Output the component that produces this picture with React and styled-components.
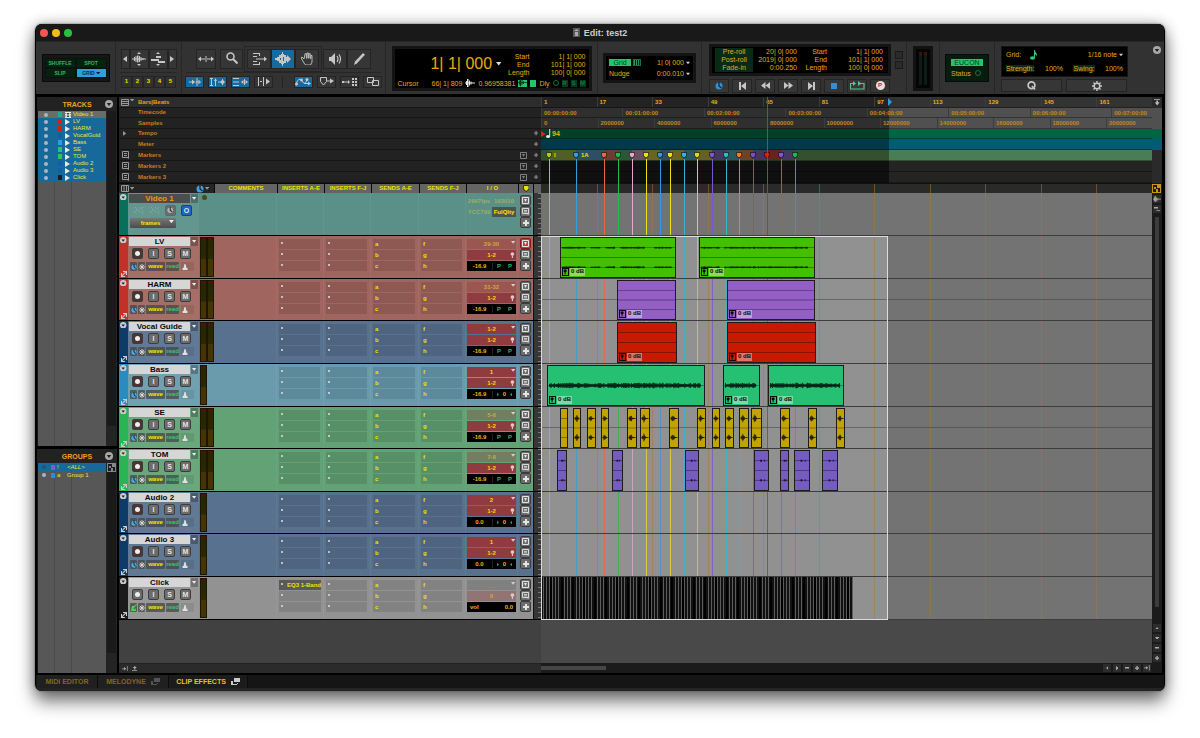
import React from 'react'
import styled, {createGlobalStyle, css} from 'styled-components'

/* ---------- data ---------- */

// the timeline is laid out in units, the full view is this many units wide
const VIEW = 611
const pct = value => `${(value / VIEW) * 100}%`

const trackList = [
    {name: 'Video 1', color: '#1fae88', video: true},
    {name: 'LV', color: '#d81e0c'},
    {name: 'HARM', color: '#d81e0c'},
    {name: 'VocalGuid', color: '#0f5fae'},
    {name: 'Bass', color: '#28a0e0'},
    {name: 'SE', color: '#26c466'},
    {name: 'TOM', color: '#26c466'},
    {name: 'Audio 2', color: '#0f5fae'},
    {name: 'Audio 3', color: '#0f5fae'},
    {name: 'Click', color: '#1c1c1c'},
]

const red = {strip: '#c23127', body: '#a0655e'}
const navy = {strip: '#0f3b69', body: '#58718f'}
const green = {strip: '#2bb455', body: '#62a274'}
const cyan = {strip: '#2a8bc0', body: '#699bad'}
const gray = {strip: '#1b1b1b', body: '#929292'}

const tracks = [
    {
        name: 'LV', skin: red, input: '29-30', dim: true, output: '1-2', vol: '-16.9', stereo: true, armed: true,
        clip: '#43c000', wave: 'thin', label: true, clips: [[19, 135], [158, 274]],
    },
    {
        name: 'HARM', skin: red, input: '31-32', dim: true, output: '1-2', vol: '-16.9', stereo: true,
        clip: '#935fc4', wave: 'flat', label: true, clips: [[76, 135], [186, 274]],
    },
    {
        name: 'Vocal Guide', skin: navy, input: '1-2', output: '1-2', vol: '-16.9', stereo: true,
        clip: '#c81a00', wave: 'flat', label: true, clips: [[76, 136], [186, 275]],
    },
    {
        name: 'Bass', skin: cyan, input: '1', output: '1-2', vol: '-16.9', pan: true,
        clip: '#26c073', wave: 'thick', label: true, clips: [[6, 164], [182, 219], [227, 303]],
    },
    {
        name: 'SE', skin: green, input: '5-6', dim: true, output: '1-2', vol: '-16.9', stereo: true,
        clip: '#c2a400', wave: 'hit',
        clips: [
            [19, 27], [32, 40], [46, 55], [60, 68], [86, 96], [99, 109], [128, 138], [156, 165],
            [171, 179], [184, 193], [198, 208], [210, 221], [239, 249], [267, 276], [295, 304],
        ],
    },
    {
        name: 'TOM', skin: green, input: '7-8', dim: true, output: '1-2', vol: '-16.9', stereo: true,
        clip: '#745cc0', wave: 'dots',
        clips: [[16, 26], [71, 82], [144, 158], [213, 228], [239, 248], [253, 269], [281, 297]],
    },
    {name: 'Audio 2', skin: navy, input: '2', output: '1-2', vol: '0.0', pan: true},
    {name: 'Audio 3', skin: navy, input: '1', output: '1-2', vol: '0.0', pan: true},
    {name: 'Click', skin: gray, input: '__', dim: true, output: '9', click: true, vol: '0.0'},
]

const markers = [
    {at: 8, color: '#a8cc1e', name: 'I'},
    {at: 35, color: '#2f9fe0', name: '1A'},
    {at: 63, color: '#ee6440'},
    {at: 77, color: '#25ba4c'},
    {at: 91, color: '#e9a4d2'},
    {at: 105, color: '#efe012'},
    {at: 119, color: '#3d93dd'},
    {at: 129, color: '#efe012'},
    {at: 143, color: '#30b4d6'},
    {at: 156, color: '#e6d60a'},
    {at: 171, color: '#7d55d0'},
    {at: 185, color: '#2bbcc8'},
    {at: 198, color: '#f57a22'},
    {at: 212, color: '#7650cc'},
    {at: 226, color: '#e01a08'},
    {at: 240, color: '#8058d4'},
    {at: 254, color: '#1fb854'},
]

const range = n => Array.from({length: n}, (_, i) => i)
const barLabels = range(11).map(i => ({at: (i * VIEW) / 11, text: String(1 + i * 16)}))
const timeLabels = range(8).map(i => ({at: (i * VIEW) / 7.5, text: `00:0${i}:00:00`}))
const sampleLabels = range(11).map(i => ({at: i * 56.5, text: String(i * 2000000)}))

/* ---------- icons ---------- */

const icons = {
    down: [6, 4, <path d="M0 0h6l-3 4z" />],
    left: [4, 6, <path d="M4 0v6l-4-3z" />],
    right: [4, 6, <path d="M0 0v6l4-3z" />],
    up: [6, 4, <path d="M0 4h6l-3-4z" />],
    plus: [6, 6, <path d="M2 0h2v2h2v2h-2v2h-2v-2h-2v-2h2z" />],
    minus: [6, 2, <path d="M0 0h6v2h-6z" />],
    chevron: [8, 8, <><circle cx="4" cy="4" r="4" /><path d="M1.8 3h4.4l-2.2 3z" fill="#222" /></>],
    horizWave: [14, 14, <path d="M0 6.5h14v1h-14zM2 5h1v4h-1zM3.500 4h1v6h-1zM5 3.500h1.500v7h-1.500zM7 4h1v6h-1zM8.500 5h1v4h-1zM10.500 6h1v2h-1zM5 2l2-2 2 2zM5 12l2 2 2-2z" />],
    midiZoom: [14, 14, <path d="M5 4h5v2h-5zM0 7h8v2h-8zM7 9h7v2h-7zM5 2l2-2 2 2zM5 12l2 2 2-2z" />],
    zoomToggle: [16, 6, <path d="M0 3l3-2.500v2h4v1h-4v2zM16 3l-3-2.500v2h-4v1h4v2zM7.500 0h1v6h-1z" />],
    magnifier: [12, 14, <><circle cx="4.500" cy="4.500" r="3.500" fill="none" stroke="currentColor" strokeWidth="1.600" /><path d="M7 7l4.500 4.500" stroke="currentColor" strokeWidth="2" /></>],
    trim: [15, 12, <path d="M1 0h7v3h-1v-2h-6zM1 12h7v-3h-1v2h-6zM1 3h4v1h-4zM1 8h4v1h-4zM4 5.500h8v-2l3 2.500-3 2.500v-2h-8z" />],
    selector: [16, 14, <path d="M0 6h2v-1h2v-2h2v-1h1v-2h1v2h1v1h2v2h1v-2l4 4-4 4v-2h-1v2h-2v1h-1v2h-1v-2h-1v-1h-2v-2h-2v-1h-2zM5 6v2h1v-2zM8 5v4h1v-4z" fillRule="evenodd" />],
    hand: [12, 13, <path d="M3 7l-2-2-1 .8 3 5.200 1.500 2h5l1.500-3v-6.500h-1.200v3h-.6v-4.800h-1.300v4.500h-.6v-5.200h-1.300v5.200h-.6v-4.500h-1.300z" fill="none" stroke="currentColor" strokeWidth=".9" />],
    scrub: [13, 12, <><path d="M0 4h2l4-4v12l-4-4h-2z" /><path d="M8 3q2 3 0 6M10 1.500q3 4.500 0 9" fill="none" stroke="currentColor" strokeWidth="1.200" /></>],
    pencil: [11, 12, <path d="M0 12l1-3.500 8-8.500 2 1.800-8 8.500z" />],
    note: [7, 10, <><ellipse cx="2.500" cy="8" rx="2.500" ry="1.800" /><path d="M4 0h1q0 2 2 4-.5 2-1 2.500 0-2-1-2.500v4h-1z" /></>],
    quarter: [5, 9, <><ellipse cx="2" cy="7.500" rx="2" ry="1.500" /><path d="M3.200 0h1v7.500h-1z" /></>],
    tabTransient: [12, 8, <path d="M0 3.500h3v-2l3 2.500-3 2.500v-2h-3zM7.500 0h1v8h-1zM6.500 3.500h5.500v1h-5.500zM9.500 2h1v4h-1z" />],
    link: [15, 8, <path d="M0 0h3v1h-1v6h1v1h-3v-1h1v-6h-1zM5 8v-5h-1l1.500-3 1.500 3h-1v5zM8 3.500h3v1h-3zM12 1h1v6h-1zM10 4l2-2v4zM15 4l-2-2v4z" />],
    automation: [15, 8, <path d="M0 0h6v1h-6zM0 3.500h6v1h-6zM0 7h6v1h-6zM8 4l2.500-2v4zM15 4l-2.500-2v4zM11 1h1v6h-1z" />],
    insertion: [13, 9, <path d="M1 0h1v9h-1zM6 0h1v9h-1zM3 4h2v1h-2zM9 1.500l4 3-4 3z" />],
    mirror: [17, 9, <><path d="M1 7q3-8 6-3t5-1" fill="none" stroke="currentColor" /><circle cx="1.500" cy="7" r="1.500" /><circle cx="6.500" cy="3" r="1.500" /><circle cx="12" cy="2.500" r="1.500" /><path d="M9 6h4v-1.500l3 2-3 2v-1.500h-4z" /></>],
    shieldArrow: [14, 9, <><path d="M.5 .5h6v4l-3 3.500-3-3.500z" fill="none" stroke="currentColor" /><path d="M7 3.500h3v-2l4 2.500-4 2.500v-2h-3z" /></>],
    layered: [15, 8, <path d="M0 3h2v2h-2zM2 3.500h4v-1.500l2 2-2 2v-1.500h-4zM10 0h2v2h-2zM13 0h2v2h-2zM10 3h2v2h-2zM13 3h2v2h-2zM10 6h2v2h-2zM13 6h2v2h-2z" />],
    windows: [12, 9, <path d="M.5 .5h6v5h-6zM5.500 3.500h6v5h-6z" fill="none" stroke="currentColor" />],
    wave: [10, 8, <path d="M0 3.500h10v1h-10zM1 2h1v4h-1zM2 0h1.500v8h-1.500zM4 1.500h1v5h-1zM5.500 2.500h1v3h-1z" />],
    clips: [8, 6, <path d="M0 0h5v2h-5zM3 4h5v2h-5z" />],
    clock: [8, 8, <><circle cx="4" cy="4" r="3.500" /><path d="M4 0v4l2.500 2" stroke="#222" fill="none" strokeWidth="1.300" /></>],
    toStart: [7, 8, <path d="M0 0h2v8h-2zM7 0v8l-5-4z" />],
    rewind: [9, 7, <path d="M4.500 0v7l-4.500-3.500zM9 0v7l-4.500-3.500z" />],
    forward: [9, 7, <path d="M0 0v7l4.500-3.500zM4.500 0v7l4.500-3.500z" />],
    toEnd: [7, 8, <path d="M5 0h2v8h-2zM0 0v8l5-4z" />],
    stop: [6, 6, <path d="M0 0h6v6h-6z" />],
    loop: [15, 9, <><path d="M3 2.500h-2.500v5.500h13.500v-5.500h-3" fill="none" stroke="currentColor" strokeWidth="1.200" /><path d="M3 0l3 2.500-3 2.500zM8 0l3.500 2.500-3.500 2.500z" /></>],
    gear: [10, 10, <><circle cx="5" cy="5" r="2.800" fill="none" stroke="currentColor" strokeWidth="1.400" /><path d="M5 0v2M5 8v2M0 5h2M8 5h2M1.500 1.500l1.400 1.400M7.100 7.100l1.400 1.400M8.500 1.500l-1.400 1.400M2.900 7.100l-1.400 1.400" stroke="currentColor" strokeWidth="1.400" /></>],
    q: [9, 9, <><circle cx="4.500" cy="4.300" r="3.400" fill="none" stroke="currentColor" strokeWidth="1.700" /><path d="M5 5l3 3.500" stroke="currentColor" strokeWidth="1.600" /></>],
    list: [8, 7, <path d="M.5 .5h7v6h-7zM1 2.500h6M1 4.500h6" fill="none" stroke="currentColor" />],
    columns: [8, 7, <path d="M.5 .5h7v6h-7zM3 1v5M5.500 1v5" fill="none" stroke="currentColor" />],
    memo: [7, 8, <><path d="M.5 .5h6v6h-6z" fill="none" stroke="currentColor" /><path d="M2 2h3v1h-3zM2 4h3v1h-3zM4 6h3v2z" /></>],
    comment: [7, 7, <><path d="M.5 .5h6v5h-6z" fill="none" stroke="currentColor" strokeWidth=".9" /><path d="M2 2h3v.7h-3zM2 3.500h3v.7h-3zM4 5h2.500v2z" /></>],
    dotBox: [7, 7, <><path d="M.5 .5h6v6h-6z" fill="none" stroke="currentColor" /><path d="M2 2h3l-1.500 3z" /></>],
    shield: [8, 9, <path d="M.5 .5h7v5l-2 1-1.500 2-1.500-2-2-1z" stroke="#111" />],
    snow: [6, 6, <path d="M3 0v6M0 3h6M.8 .8l4.400 4.400M5.200 .8l-4.400 4.400" stroke="currentColor" strokeWidth=".9" />],
    metronome: [6, 6, <path d="M2.500 0h1l1 4h1v2h-5v-2h1z" />],
    clickIcon: [6, 7, <path d="M1 2l-1 5h5l-.5-3-1.500 1.500-.7-.7 3.700-4.300-.7-.5-2 2z" />],
    resize: [6, 6, <path d="M2 0h4v4h-1v-2.500l-3.500 3.500h-.5v-1l3-3h-2zM0 2h1v3h3v1h-4z" />],
    popout: [9, 7, <><path d="M3 0h6v4h-6z" /><path d="M0 3h2v3h5v-1h-1v2h-6z" /></>],
    mark: [5, 6, <path d="M0 0l5 3-5 3z" />],
    speaker: [5, 6, <path d="M0 0l5 3-5 3z" />],
    film: [6, 6, <><path d="M0 0h6v6h-6z" /><path d="M2 1h2v1.500h-2zM2 3.500h2v1.500h-2zM.4 1h.8v1h-.8zM.4 3.500h.8v1h-.8zM4.800 1h.8v1h-.8zM4.800 3.500h.8v1h-.8z" fill="#444" /></>],
    checker: [9, 9, <path d="M0 0h9v9h-9v-8h1v7h7v-7h-8zM2 3h2v2h-2zM5 1h3v3h-3zM4 5h2v3h-2z" />],
    pins: [6, 8, <><circle cx="3" cy="2.500" r="2.300" /><path d="M2.300 4h1.400v4h-1.400z" /></>],
    hatch: [10, 9, <path d="M1 1l2 2M5 1l2 2M9 1l-2 3M0 5l3 3M4 4l2 3M8 5l1 3M2 5l1-2" stroke="currentColor" strokeWidth="1" strokeDasharray="1 1" />],
    insertEnd: [8, 8, <path d="M0 3.500h3v-2l3 2.500-3 2.500v-2h-3zM7 0h1v8h-1z" />],
    lift: [8, 7, <path d="M4 0l3 3h-2v2h-2v-2h-2zM0 6h8v1h-8z" />],
    drop: [8, 8, <path d="M0 0h8v1h-8zM3 2h2v2h2l-3 4-3-4h2z" />],
    doc: [7, 9, <><path d="M0 0h7v9h-7z" opacity=".35" /><path d="M1 3l2.500-2 2.500 2zM2 4h3v4h-3z" opacity=".7" /></>],
}

const Icon = ({name, scale = 1}) => {
    const [w, h, shape] = icons[name]
    return (
        <IconSvg width={w * scale} height={h * scale} viewBox={`0 0 ${w} ${h}`} fill="currentColor" aria-hidden="true">
            {shape}
        </IconSvg>
    )
}

/* ---------- toolbar ---------- */

const EditModes = () => (
    <ToolSection $width={80}>
        <ModeBox>
            <ModeButton>SHUFFLE</ModeButton>
            <ModeButton>SPOT</ModeButton>
            <ModeButton>SLIP</ModeButton>
            <ModeButton $active>GRID <Icon name="down" scale={0.7} /></ModeButton>
        </ModeBox>
    </ToolSection>
)

const ZoomTools = () => (
    <ToolSection $width={66} $column>
        <ButtonRow $height={20}>
            <ToolButton $width={9} aria-label="Zoom out"><Icon name="left" /></ToolButton>
            <ToolButton $width={19} aria-label="Zoom audio"><Icon name="horizWave" /></ToolButton>
            <ToolButton $width={19} aria-label="Zoom MIDI"><Icon name="midiZoom" /></ToolButton>
            <ToolButton $width={9} aria-label="Zoom in"><Icon name="right" /></ToolButton>
        </ButtonRow>
        <Rule />
        <ButtonRow $height={12}>
            {['1', '2', '3', '4', '5'].map(n => <PresetButton key={n}>{n}</PresetButton>)}
        </ButtonRow>
    </ToolSection>
)

const EditTools = () => (
    <ToolSection $width={204} $column>
        <ButtonRow $height={20} $gap={4}>
            <ToolButton $width={20} aria-label="Zoom toggle"><Icon name="zoomToggle" /></ToolButton>
            <ToolButton $width={23} aria-label="Zoomer"><Icon name="magnifier" /></ToolButton>
            <SmartTool>
                <ToolButton $width={24} aria-label="Trim"><Icon name="trim" /></ToolButton>
                <ToolButton $width={24} $active aria-label="Selector"><Icon name="selector" /></ToolButton>
                <ToolButton $width={24} aria-label="Grabber"><Icon name="hand" /></ToolButton>
            </SmartTool>
            <ButtonRow $height={20}>
                <ToolButton $width={24} aria-label="Scrubber"><Icon name="scrub" /></ToolButton>
                <ToolButton $width={24} aria-label="Pencil"><Icon name="pencil" /></ToolButton>
            </ButtonRow>
        </ButtonRow>
        <Rule />
        <ButtonRow $height={12} $gap={4}>
            <ToolButton $width={19} $active aria-label="Tab to transient"><Icon name="tabTransient" /></ToolButton>
            <ToolButton $width={19} $active aria-label="Link timeline"><Icon name="link" /></ToolButton>
            <ToolButton $width={19} $active aria-label="Link track"><Icon name="automation" /></ToolButton>
            <ToolButton $width={19} aria-label="Insertion follows playback"><Icon name="insertion" /></ToolButton>
            <Divider />
            <ToolButton $width={19} $active aria-label="Automation follows edit"><Icon name="mirror" /></ToolButton>
            <ToolButton $width={19} aria-label="Markers follow edit"><Icon name="shieldArrow" /></ToolButton>
            <ToolButton $width={19} aria-label="Mirrored editing"><Icon name="layered" /></ToolButton>
            <ToolButton $width={19} aria-label="Layered editing"><Icon name="windows" /></ToolButton>
        </ButtonRow>
    </ToolSection>
)

const Counter = () => (
    <ToolSection $width={212}>
        <Display>
            <CounterTop>
                <BigCount>1| 1| 000 <Icon name="down" scale={0.9} /></BigCount>
                <Readout>
                    <dt>Start</dt><dd>1| 1| 000</dd>
                    <dt>End</dt><dd>101| 1| 000</dd>
                    <dt>Length</dt><dd>100| 0| 000</dd>
                </Readout>
            </CounterTop>
            <CounterBottom>
                <span>Cursor</span>
                <CursorValue>66| 1| 809</CursorValue>
                <White><Icon name="wave" /></White>
                <span>0.96958381</span>
                <MiniLed $on><Icon name="wave" scale={0.9} /></MiniLed>
                <MiniLed $on />
                <span>Dly</span>
                <Ring />
                <MiniLed>R</MiniLed>
                <MiniLed>S</MiniLed>
                <MiniLed>M</MiniLed>
            </CounterBottom>
        </Display>
    </ToolSection>
)

const GridNudge = () => (
    <ToolSection $width={104}>
        <GridBox>
            <FieldRow>
                <span><GridBadge>Grid</GridBadge><BarBadge /></span>
                <PickWrap>
                    <Pick aria-label="Grid value" $width={42}><option>1| 0| 000</option></Pick>
                    <Icon name="down" />
                </PickWrap>
            </FieldRow>
            <FieldRow>
                <span>Nudge</span>
                <PickWrap>
                    <Pick aria-label="Nudge value" $width={42}><option>0:00.010</option></Pick>
                    <Icon name="down" />
                </PickWrap>
            </FieldRow>
        </GridBox>
    </ToolSection>
)

const Transport = () => (
    <ToolSection $width={205} $column>
        <RollRow>
            <RollBox>
                <RollLabels><span>Pre-roll</span><span>Post-roll</span><span>Fade-in</span></RollLabels>
                <RollValues><span>20| 0| 000</span><span>2019| 0| 000</span><span>0:00.250</span></RollValues>
                <Readout>
                    <dt>Start</dt><dd>1| 1| 000</dd>
                    <dt>End</dt><dd>101| 1| 000</dd>
                    <dt>Length</dt><dd>100| 0| 000</dd>
                </Readout>
            </RollBox>
            <SquareStack><i /><i /></SquareStack>
        </RollRow>
        <ButtonRow $height={14} $gap={3} $left>
            <ToolButton $width={20} $tint="#2f90d8" aria-label="Timebase"><Icon name="clock" /></ToolButton>
            <ToolButton $width={20} aria-label="Return to zero"><Icon name="toStart" /></ToolButton>
            <ToolButton $width={20} aria-label="Rewind"><Icon name="rewind" /></ToolButton>
            <ToolButton $width={20} aria-label="Fast forward"><Icon name="forward" /></ToolButton>
            <ToolButton $width={20} aria-label="Go to end"><Icon name="toEnd" /></ToolButton>
            <ToolButton $width={20} $tint="#2f90d8" aria-label="Stop"><Icon name="stop" /></ToolButton>
            <ToolButton $width={20} $tint="#52c886" aria-label="Play"><Icon name="loop" /></ToolButton>
            <ToolButton $width={20} aria-label="Record"><PunchDot>P</PunchDot></ToolButton>
        </ButtonRow>
    </ToolSection>
)

const NoteGrid = () => (
    <LastSection>
        <NoteColumn>
            <NoteBox>
                <FieldRow>
                    <NoteLabel>Grid: <Icon name="note" /></NoteLabel>
                    <PickWrap>
                        <Pick aria-label="Grid note" $width={42}><option>1/16 note</option></Pick>
                        <Icon name="down" />
                    </PickWrap>
                </FieldRow>
                <FieldRow>
                    <GreenText>Strength:</GreenText><span>100%</span>
                    <GreenText>Swing:</GreenText><span>100%</span>
                </FieldRow>
            </NoteBox>
            <ButtonRow $height={13} $gap={4} $left>
                <ToolButton $width={61} aria-label="Quantize"><Icon name="q" /></ToolButton>
                <ToolButton $width={61} aria-label="Settings"><Icon name="gear" /></ToolButton>
            </ButtonRow>
        </NoteColumn>
        <RoundButton aria-label="Toolbar menu"><Icon name="chevron" /></RoundButton>
    </LastSection>
)

const Toolbar = () => (
    <ToolbarRow>
        <EditModes />
        <ZoomTools />
        <EditTools />
        <Counter />
        <GridNudge />
        <Transport />
        <ToolSection $width={33}><MeterBox><i /><i /></MeterBox></ToolSection>
        <ToolSection $width={55}>
            <EuconBox><GridBadge $wide>EUCON</GridBadge><StatusLine>Status <Ring /></StatusLine></EuconBox>
        </ToolSection>
        <NoteGrid />
    </ToolbarRow>
)

/* ---------- sidebar ---------- */

const Sidebar = () => (
    <Side>
        <SidePanel $grow={349}>
            <SideTitle>TRACKS <RoundButton aria-label="Tracks menu"><Icon name="chevron" /></RoundButton></SideTitle>
            <SideBody>
                <SideList>
                    {trackList.map(t => (
                        <SideItem key={t.name} $on={!t.video}>
                            <Eye />
                            <Swatch $color={t.color} />
                            <White><Icon name={t.video ? 'film' : 'speaker'} /></White>
                            <span>{t.name}</span>
                        </SideItem>
                    ))}
                </SideList>
                <SideScroll />
            </SideBody>
        </SidePanel>
        <SidePanel $grow={224}>
            <SideTitle>GROUPS <RoundButton aria-label="Groups menu"><Icon name="chevron" /></RoundButton></SideTitle>
            <SideBody>
                <SideList>
                    <GroupItem $on><Eye $hollow /><Swatch $color="#7a5cd0" /><span>!</span><em>&lt;ALL&gt;</em></GroupItem>
                    <GroupItem><Eye /><Swatch $color="#2a8fd0" /><span>a</span><span>Group 1</span></GroupItem>
                </SideList>
                <SideScroll><Icon name="checker" /></SideScroll>
            </SideBody>
        </SidePanel>
    </Side>
)

/* ---------- channel pane ---------- */

const rulerNames = ['Bars|Beats', 'Timecode', 'Samples', 'Tempo', 'Meter', 'Markers', 'Markers 2', 'Markers 3']

const RulerNames = () => (
    <RulerRows>
        {rulerNames.map((name, i) => (
            <RulerName key={name} $first={i === 0}>
                <RulerIcon>
                    {i === 0 && <><Icon name="list" /><Icon name="down" scale={0.7} /></>}
                    {i === 3 && <Icon name="right" scale={0.8} />}
                    {i > 4 && <Icon name="memo" />}
                </RulerIcon>
                <span>{name}</span>
                <RulerEnd>
                    {i > 4 && <Icon name="dotBox" />}
                    {i > 2 && <Icon name="plus" scale={0.7} />}
                </RulerEnd>
            </RulerName>
        ))}
    </RulerRows>
)

const ColumnHeads = () => (
    <HeadRow>
        <HeadTools>
            <Icon name="columns" /><Icon name="down" scale={0.7} />
            <Blue><Icon name="clock" /></Blue><Icon name="down" scale={0.7} />
        </HeadTools>
        {['COMMENTS', 'INSERTS A-E', 'INSERTS F-J', 'SENDS A-E', 'SENDS F-J', 'I / O'].map(h => (
            <HeadCell key={h}>{h}</HeadCell>
        ))}
        <HeadCell><Icon name="shield" scale={0.8} /></HeadCell>
        <HeadCell />
    </HeadRow>
)

const SideButtons = ({armed}) => (
    <SlotColumn $tight>
        <SquareButton $armed={armed} aria-label="Track options"><Icon name="dotBox" /></SquareButton>
        <SquareButton aria-label="Track comments"><Icon name="comment" /></SquareButton>
        <SquareButton aria-label="Add"><Icon name="plus" /></SquareButton>
    </SlotColumn>
)

const VideoChannel = () => (
    <ChannelRow $color="#5a9087">
        <ColorStrip $color="#08705a"><Icon name="chevron" scale={0.8} /></ColorStrip>
        <ChannelControls>
            <NameLine>
                <TrackName $dark>Video 1</TrackName>
                <NameArrow aria-label="Track menu"><Icon name="down" scale={0.7} /></NameArrow>
            </NameLine>
            <VideoButtons>
                <Dim><Icon name="hatch" /></Dim>
                <Dim><Icon name="hatch" /></Dim>
                <SquareButton $faded aria-label="Timebase"><Icon name="clock" scale={0.8} /></SquareButton>
                <SquareButton $blue aria-label="Online">O</SquareButton>
            </VideoButtons>
            <FramesWrap>
                <FramesPick aria-label="Track view"><option>frames</option></FramesPick>
                <Icon name="down" scale={0.8} />
            </FramesWrap>
        </ChannelControls>
        <MeterCell><VideoDot /></MeterCell>
        <Cell /><Cell /><Cell /><Cell /><Cell />
        <VideoInfo>
            <span>2997fps</span><span>192010</span>
            <span>YCC709</span><b>FulQlty</b>
        </VideoInfo>
        <SideButtons />
        <Scale />
    </ChannelRow>
)

const AudioChannel = ({track}) => (
    <ChannelRow $color={track.skin.body}>
        <ColorStrip $color={track.skin.strip}>
            <Icon name="chevron" scale={0.8} />
            <Icon name="resize" />
        </ColorStrip>
        <ChannelControls>
            <NameLine>
                <TrackName>{track.name}</TrackName>
                <NameArrow aria-label="Track menu"><Icon name="down" scale={0.7} /></NameArrow>
            </NameLine>
            <MuteRow>
                <SquareButton $rec={!track.click} aria-label="Record enable"><RecDot /></SquareButton>
                <SquareButton>I</SquareButton>
                <SquareButton>S</SquareButton>
                <SquareButton>M</SquareButton>
            </MuteRow>
            <ModeRow>
                <Chip $width={7} $tint={track.click ? '#40e040' : '#45a8ea'} aria-label="Timebase">
                    <Icon name={track.click ? 'clickIcon' : 'clock'} scale={track.click ? 1 : 0.75} />
                </Chip>
                <Chip $width={7} $tint="#ddd" aria-label="Freeze"><Icon name="snow" /></Chip>
                <Chip $width={19} $tint="#f5e800">wave</Chip>
                <Chip $width={13} $tint="#3cc274">read</Chip>
                <Elastic><Icon name="metronome" /></Elastic>
            </ModeRow>
        </ChannelControls>
        <MeterCell>
            <Meter />
            {track.stereo && <Meter />}
        </MeterCell>
        <Cell />
        {[0, 1].map(group => (
            <SlotColumn key={group}>
                {[0, 1, 2].map(i => (
                    <Slot key={i} $filled={track.click && !group && !i}>
                        <Bullet />{track.click && !group && !i ? 'EQ3 1-Band' : ''}
                    </Slot>
                ))}
            </SlotColumn>
        ))}
        {['abc', 'fgh'].map(letters => (
            <SlotColumn key={letters}>
                {letters.split('').map(l => <Slot key={l}>{l}</Slot>)}
            </SlotColumn>
        ))}
        <SlotColumn>
            <IoSlot $dim={track.dim} $muted={track.click}>{track.input}<Icon name="down" scale={0.7} /></IoSlot>
            <IoSlot $dim={track.click}>{track.output}<Icon name="pins" scale={0.8} /></IoSlot>
            {track.click
                ? <VolSlot $spread><span>vol</span><span>{track.vol}</span></VolSlot>
                : (
                    <VolSlot>
                        <span>{track.vol}</span>
                        {track.pan
                            ? <Pan><Icon name="right" scale={0.5} />0<Icon name="left" scale={0.5} /></Pan>
                            : <Pan $pair><i>P</i><i>P</i></Pan>}
                    </VolSlot>
                )}
        </SlotColumn>
        <SideButtons armed={track.armed} />
        <Scale />
    </ChannelRow>
)

/* ---------- timeline ---------- */

const noise = n => Math.abs(Math.sin(n * 12.9898) * 43758.5453) % 1

// wave form of one clip, in a box that is `width` units wide and 40 high
const wavePath = (kind, width, mid, seed) => {
    let d = ''
    if (kind === 'hit') {
        if (seed === 19) return d
        for (let x = 1; x < width - 1; x++) {
            const fall = Math.max(0.5, 4 - Math.abs(x - 3) * 1.2) * (0.6 + noise(seed + x) * 0.5)
            d += `M${x} ${mid - fall}h1v${fall * 2}h-1z`
        }
        return d
    }
    if (kind === 'dots') {
        return `M${width * 0.4} ${mid - 1}h2v2h-2zM${width * 0.7} ${mid - 1}h1v2h-1z`
    }
    for (let x = 1; x < width - 3; x++) {
        const a = kind === 'thick' ? 1.2 + noise(seed + x) * 1.6 : 0.5 + noise(seed + x) * 0.5
        if (kind === 'thin' && noise(seed + Math.floor(x / 5)) > 0.86) continue
        d += `M${x} ${mid - a}h1v${a * 2}h-1z`
    }
    return d
}

const Clip = ({track, span}) => {
    const [from, to] = span
    const width = to - from
    const mids = track.stereo ? [10, 30] : [20]
    return (
        <ClipBox $color={track.clip} style={{left: pct(from), width: pct(width)}}>
            <ClipSvg viewBox={`0 0 ${width} 40`} preserveAspectRatio="none" aria-hidden="true">
                {mids.map(mid => <path key={mid} d={`M0 ${mid - 0.3}h${width}v.6h-${width}z`} opacity=".6" />)}
                {track.stereo && <path d={`M0 19.500h${width}v1h-${width}z`} opacity=".35" />}
                {track.wave !== 'flat' && mids.map(mid => (
                    <path key={mid} d={wavePath(track.wave, width, mid, from)} opacity=".75" />
                ))}
            </ClipSvg>
            {track.label && <ClipGain><i><Icon name="pins" scale={0.7} /></i><b>0 dB</b></ClipGain>}
        </ClipBox>
    )
}

const Rulers = () => (
    <RulerRows>
        <RulerRow $bg="#232323" $light="#333">
            {barLabels.map(l => <TickLabel key={l.text} $bright style={{left: pct(l.at)}}>{l.text}</TickLabel>)}
        </RulerRow>
        <RulerRow $bg="#2f2f2f" $light="#505050">
            {timeLabels.map(l => <TickLabel key={l.text} style={{left: pct(l.at)}}>{l.text}</TickLabel>)}
        </RulerRow>
        <RulerRow $bg="#2f2f2f" $light="#505050">
            {sampleLabels.map(l => <TickLabel key={l.text} style={{left: pct(l.at)}}>{l.text}</TickLabel>)}
        </RulerRow>
        <RulerRow $bg="#003f28" $light="#006543">
            <Tempo><RedMark><Icon name="mark" /></RedMark><White><Icon name="quarter" /></White>94</Tempo>
        </RulerRow>
        <RulerRow $bg="#003a49" $light="#005c72" />
        <RulerRow $bg="#34502f" $light="#4a7d54">
            {markers.slice(0, -1).map((m, i) => (
                <MarkerBand
                    key={m.at}
                    $color={m.color}
                    style={{left: pct(m.at), width: pct(markers[i + 1].at - m.at)}}
                />
            ))}
        </RulerRow>
        <RulerRow $bg="#101010" $light="#242422" />
        <RulerRow $bg="#101010" $light="#242422" />
    </RulerRows>
)

const Timeline = () => (
    <TimelinePane>
        <Rulers />
        <GapRow />
        <LaneArea>
            <Selection style={{width: pct(347)}} />
            <Lane />
            {tracks.map(t => (
                <Lane key={t.name} $split={t.stereo}>
                    {(t.clips || []).map(span => <Clip key={span[0]} track={t} span={span} />)}
                    {t.click && <ClickClip style={{width: pct(312)}} />}
                </Lane>
            ))}
            <SelectionFrame style={{width: pct(347)}} />
        </LaneArea>
        <GridLines>
            {barLabels.slice(1).map(l => <GridLine key={l.text} style={{left: pct(l.at)}} />)}
        </GridLines>
        <MarkerLayer>
            {markers.map(m => (
                <MarkerLine key={m.at} $color={m.color} style={{left: pct(m.at)}}>
                    <Icon name="shield" scale={0.75} />
                    {m.name && <b>{m.name}</b>}
                </MarkerLine>
            ))}
        </MarkerLayer>
        <PlayLine style={{left: pct(226)}} />
        <EndFlag style={{left: pct(347)}} />
        <Filler $color="#494949" />
        <ScrollRow>
            <HThumb />
            <ScrollButtons>
                {['left', 'right', 'minus', 'plus', 'insertEnd'].map(n => (
                    <ScrollButton key={n} aria-label={n}><Icon name={n} scale={0.7} /></ScrollButton>
                ))}
            </ScrollButtons>
        </ScrollRow>
    </TimelinePane>
)

const RightStrip = () => (
    <StripPane>
        <RulerRows>
            <StripCell><Icon name="drop" scale={0.8} /></StripCell>
            <StripCell $color="#505050" />
            <StripCell $color="#505050" />
            <StripCell $color="#006543" />
            <StripCell $color="#005c72" />
            <StripCell /><StripCell /><StripCell />
        </RulerRows>
        <CheckCell><Icon name="checker" /></CheckCell>
        <ScrollButton aria-label="Audio zoom" $tall><Icon name="wave" scale={0.8} /></ScrollButton>
        <ScrollButton aria-label="MIDI zoom" $tall><Icon name="clips" scale={0.8} /></ScrollButton>
        <VTrack><VThumb /></VTrack>
        {['up', 'down', 'minus', 'plus'].map(n => (
            <ScrollButton key={n} aria-label={n} $tall><Icon name={n} scale={0.7} /></ScrollButton>
        ))}
        <ScrollRow />
    </StripPane>
)

const App = () => (
    <>
        <GlobalStyle />
        <Window>
            <TitleBar>
                <Lights><Light $color="#f4574e" /><Light $color="#f2bb18" /><Light $color="#28c23e" /></Lights>
                <Title><Icon name="doc" />Edit: test2</Title>
            </TitleBar>
            <Toolbar />
            <Body>
                <Sidebar />
                <Main>
                    <ChannelPane>
                        <RulerNames />
                        <ColumnHeads />
                        <Channels>
                            <VideoChannel />
                            {tracks.map(t => <AudioChannel key={t.name} track={t} />)}
                        </Channels>
                        <Filler $color="#414141" />
                        <ChannelFoot>
                            <Icon name="insertEnd" scale={0.7} />
                            <Icon name="lift" scale={0.7} />
                        </ChannelFoot>
                    </ChannelPane>
                    <Timeline />
                    <RightStrip />
                </Main>
            </Body>
            <Footer>
                <Tab $width={61}>MIDI EDITOR</Tab>
                <Tab $width={71}>MELODYNE <Icon name="popout" /></Tab>
                <Tab $width={79} $active>CLIP EFFECTS <Icon name="popout" /></Tab>
            </Footer>
        </Window>
    </>
)

/* ---------- styles ---------- */

const GlobalStyle = createGlobalStyle`
    *, *::before, *::after { box-sizing: border-box; }
    body {
        margin: 0;
        background: #fff;
        color: #eaa810;
        font: 6px/7px "Liberation Sans", Arial, sans-serif;
    }
    button, select {
        margin: 0;
        padding: 0;
        border: 0;
        background: none;
        color: inherit;
        font: inherit;
    }
    ul, dl, dd { margin: 0; padding: 0; }
    i { font-style: normal; }
`

const center = css`
    display: flex;
    align-items: center;
    justify-content: center;
`

const bold = css`
    font-weight: bold;
    white-space: nowrap;
`

const IconSvg = styled.svg`
    display: block;
    flex: none;
`

const White = styled.span`
    color: #e8e8e8;
`

const Blue = styled.span`
    color: #3f9fe6;
    margin-left: auto;
`

const Dim = styled.span`
    ${center}
    width: 11px;
    color: #8fb3ab;
`

const Window = styled.div`
    display: flex;
    flex-direction: column;
    margin: 24px 35px 47px;
    min-height: calc(100vh - 71px);
    padding: 0 1px;
    border-radius: 7px;
    overflow: hidden;
    background: #000;
    box-shadow: 0 0 2px #555, 0 0 14px rgba(0, 0, 0, .3), 0 11px 17px rgba(0, 0, 0, .5);
`

const TitleBar = styled.header`
    position: relative;
    ${center}
    height: 18px;
    background: #191919;
    border-bottom: 1px solid #262626;
`

const Lights = styled.div`
    position: absolute;
    left: 4px;
    display: flex;
    gap: 4px;
`

const Light = styled.span`
    width: 8px;
    height: 8px;
    border-radius: 4px;
    background: ${p => p.$color};
`

const Title = styled.h1`
    ${center}
    gap: 4px;
    margin: 0;
    color: #cdcdcd;
    font-size: 9px;
    line-height: 10px;
`

const ToolbarRow = styled.div`
    display: flex;
    height: 52px;
    background: #323232;
`

const ToolSection = styled.section`
    display: flex;
    flex: none;
    flex-direction: ${p => (p.$column ? 'column' : 'row')};
    align-items: center;
    justify-content: center;
    gap: ${p => (p.$column ? 3 : 0)}px;
    width: ${p => p.$width}px;
    border-right: 1px solid #272727;
`

const LastSection = styled.section`
    display: flex;
    flex: 1;
    align-items: flex-start;
    justify-content: space-between;
    padding: 4px 3px 0 6px;
`

const ModeBox = styled.div`
    display: grid;
    grid-template-columns: 31px 31px;
    grid-auto-rows: 10px;
    padding: 3px 2px;
    background: #161616;
    border: 1px solid #0a0a0a;
`

const ModeButton = styled.button`
    ${center}
    ${bold}
    gap: 1px;
    border: 1px solid #05150b;
    background: #04220f;
    color: #2fb868;
    font-size: 5px;
    ${p => p.$active && 'background: #2d9fe0; color: #0c2c44;'}
`

const ButtonRow = styled.div`
    display: flex;
    align-items: center;
    height: ${p => p.$height}px;
    gap: ${p => p.$gap || 0}px;
    ${p => p.$left && 'align-self: flex-start;'}
    & > * { height: 100%; }
`

const ToolButton = styled.button`
    ${center}
    width: ${p => p.$width}px;
    border: 1px solid #242424;
    background: ${p => (p.$active ? '#176a9e' : '#363636')};
    color: ${p => p.$tint || '#c6c6c6'};
`

const SmartTool = styled.div`
    display: flex;
    outline: 1px solid #252525;
    outline-offset: 2px;
`

const PresetButton = styled.button`
    ${center}
    ${bold}
    width: 11px;
    border: 1px solid #242424;
    color: #f0e000;
`

const Rule = styled.div`
    align-self: stretch;
    height: 1px;
    margin: 0 4px;
    background: #262626;
`

const Divider = styled.span`
    width: 1px;
    margin: 0 7px 0 5px;
    background: #232323;
`

const Display = styled.div`
    width: 200px;
    height: 45px;
    padding: 3px;
    border: 3px solid #141414;
    background: #000;
`

const CounterTop = styled.div`
    display: flex;
    align-items: center;
    justify-content: flex-end;
    gap: 6px;
    height: 25px;
`

const BigCount = styled.div`
    display: flex;
    align-items: center;
    gap: 4px;
    color: #e8ab0c;
    font-size: 16px;
    line-height: 18px;
    white-space: nowrap;
    svg { color: #ddd; }
`

const Readout = styled.dl`
    display: grid;
    grid-template-columns: 22px 56px;
    grid-auto-rows: 8px;
    align-items: center;
    text-align: right;
    font-size: 7px;
    white-space: nowrap;
    dd { color: #e8ab0c; }
`

const CounterBottom = styled.div`
    display: flex;
    align-items: center;
    gap: 3px;
    height: 9px;
    margin-top: 2px;
    font-size: 7px;
    white-space: nowrap;
`

const CursorValue = styled.span`
    flex: 1;
    text-align: right;
`

const MiniLed = styled.span`
    ${center}
    min-width: 6px;
    height: 7px;
    background: ${p => (p.$on ? '#25c46e' : '#063a1d')};
    color: ${p => (p.$on ? '#06351b' : '#149150')};
    font-size: 6px;
`

const Ring = styled.span`
    display: inline-block;
    width: 6px;
    height: 6px;
    border: 1px solid #16703c;
    border-radius: 3px;
`

const GridBox = styled.div`
    width: 93px;
    padding: 1px;
    border: 3px solid #141414;
    background: #000;
`

const FieldRow = styled.div`
    display: flex;
    align-items: center;
    justify-content: space-between;
    height: 11px;
    padding: 0 2px;
    font-size: 7px;
    white-space: nowrap;
`

const GridBadge = styled.span`
    display: inline-block;
    width: ${p => (p.$wide ? 32 : 22)}px;
    background: #25c46e;
    color: #064021;
    font-size: 7px;
    text-align: center;
`

const BarBadge = styled.span`
    display: inline-block;
    width: 8px;
    height: 7px;
    margin-left: 2px;
    border: 1px solid #16703c;
    background: repeating-linear-gradient(90deg, #1a9a54 0 1px, #03200f 1px 2px);
    vertical-align: bottom;
`

const PickWrap = styled.span`
    display: flex;
    align-items: center;
    gap: 2px;
    svg { width: 4px; color: #d0d0d0; }
`

const Pick = styled.select`
    width: ${p => p.$width}px;
    appearance: none;
    text-align: right;
    text-align-last: right;
    color: #e8ab0c;
`

const RollRow = styled.div`
    display: flex;
    align-self: flex-start;
    align-items: center;
    gap: 4px;
    margin-left: 7px;
    & + div { margin-left: 7px; }
`

const RollBox = styled.div`
    display: flex;
    width: 182px;
    padding: 1px 3px;
    border: 3px solid #141414;
    background: #000;
`

const RollLabels = styled.div`
    display: grid;
    width: 38px;
    background: #062c16;
    font-size: 7px;
    line-height: 8px;
    text-align: center;
`

const RollValues = styled.div`
    display: grid;
    width: 44px;
    margin-right: 8px;
    color: #e8ab0c;
    font-size: 7px;
    line-height: 8px;
    text-align: right;
    white-space: nowrap;
`

const SquareStack = styled.div`
    display: grid;
    gap: 2px;
    i {
        width: 8px;
        height: 8px;
        border: 1px solid #1a1a1a;
        background: #2a2a2a;
    }
`

const PunchDot = styled.span`
    ${center}
    width: 9px;
    height: 9px;
    border-radius: 5px;
    background: #e8e0de;
    color: #c8201a;
    font-weight: bold;
`

const MeterBox = styled.div`
    display: flex;
    justify-content: center;
    gap: 2px;
    width: 20px;
    height: 45px;
    padding: 3px 0;
    border: 3px solid #121212;
    background: #050505;
    i {
        width: 3px;
        background: linear-gradient(#3a1408 3px, #0e1c17 3px);
    }
`

const EuconBox = styled.div`
    width: 44px;
    padding: 4px 5px 2px;
    border: 1px solid #0a0a0a;
    background: #051d0e;
`

const StatusLine = styled.div`
    display: flex;
    align-items: center;
    justify-content: space-between;
    height: 12px;
    padding: 0 2px 0 0;
    font-size: 7px;
`

const NoteColumn = styled.div`
    display: flex;
    flex-direction: column;
    gap: 2px;
`

const NoteBox = styled.div`
    display: grid;
    gap: 3px;
    width: 127px;
    padding: 2px;
    background: #000;
    border: 1px solid #141414;
`

const NoteLabel = styled.span`
    display: flex;
    align-items: center;
    gap: 9px;
    svg { color: #35c878; }
`

const GreenText = styled.span`
    background: #062c16;
`

const RoundButton = styled.button`
    ${center}
    color: #a8a8a8;
`

const Body = styled.div`
    display: flex;
    flex: 1;
    gap: 2px;
    padding: 3px 2px 2px 1px;
`

const Side = styled.aside`
    display: flex;
    flex: none;
    flex-direction: column;
    gap: 3px;
    width: 80px;
`

const SidePanel = styled.section`
    display: flex;
    flex: ${p => p.$grow} 1 0;
    flex-direction: column;
`

const SideTitle = styled.h2`
    ${center}
    position: relative;
    height: 14px;
    margin: 0;
    background: #222;
    color: #f0a020;
    font-size: 7px;
    button {
        position: absolute;
        right: 4px;
    }
`

const SideBody = styled.div`
    display: flex;
    flex: 1;
`

const SideList = styled.ul`
    flex: 1;
    border-left: 1px solid #111;
    background: linear-gradient(90deg, transparent 16px, #4a4a4a 16px 17px, transparent 17px 33px, #4a4a4a 33px 34px, transparent 34px), #575757;
`

const SideItem = styled.li`
    display: grid;
    grid-template-columns: 16px 11px 8px 1fr;
    align-items: center;
    height: 7px;
    background: ${p => (p.$on ? '#17699a' : '#6b6b6b')};
    color: #ece436;
    white-space: nowrap;
`

const GroupItem = styled(SideItem)`
    grid-template-columns: 11px 8px 10px 1fr;
    height: 8px;
    ${p => !p.$on && 'background: none;'}
`

const Eye = styled.i`
    justify-self: center;
    width: 4px;
    height: 4px;
    border-radius: 2px;
    background: ${p => (p.$hollow ? '#1f5578' : '#a9b8c2')};
`

const Swatch = styled.i`
    justify-self: center;
    width: 4px;
    height: 5px;
    background: ${p => p.$color};
`

const SideScroll = styled.div`
    width: 11px;
    background: linear-gradient(#1a1a1a, #1a1a1a) content-box, #242424;
    padding: 0 1px 20px;
    color: #888;
`

const Main = styled.main`
    display: flex;
    flex: 1;
    min-width: 0;
`

const ChannelPane = styled.div`
    display: flex;
    flex: none;
    flex-direction: column;
    width: 422px;
`

const RulerRows = styled.div`
    display: grid;
    grid-template-rows: 11px 10px 11px 10px 11px 11px 11px 11px;
`

const RulerName = styled.div`
    ${bold}
    display: flex;
    align-items: center;
    border-bottom: 1px solid #161616;
    background: ${p => (p.$first ? '#2d2d2d' : '#222')};
    color: ${p => (p.$first ? '#f09a1e' : '#c87e1a')};
`

const RulerIcon = styled.span`
    display: flex;
    justify-content: center;
    width: 19px;
    padding-right: 7px;
    color: #999;
    svg + svg { margin: 0 -6px 0 1px; }
`

const RulerEnd = styled.span`
    display: flex;
    align-items: center;
    gap: 7px;
    margin-left: auto;
    padding-right: 3px;
    color: #808080;
`

const HeadRow = styled.div`
    display: grid;
    grid-template-columns: 95px 63px 47px 47px 48px 47px 52px 15px 8px;
    height: 10px;
    padding-top: 1px;
    background: #0a0a0a;
`

const HeadTools = styled.div`
    display: flex;
    align-items: center;
    gap: 1px;
    padding: 0 5px 0 2px;
    background: #252525;
    color: #999;
`

const HeadCell = styled.div`
    ${center}
    ${bold}
    margin-left: 1px;
    background: #646464;
    color: #f0e000;
`

const trackRows = css`
    display: grid;
    grid-auto-rows: 43px 43px 42px 43px 43px 42px 43px 42px 43px 43px;
`

const Channels = styled.div`
    ${trackRows}
`

const ChannelRow = styled.div`
    display: grid;
    grid-template-columns: 9px 71px 15px 63px 47px 47px 48px 47px 52px 15px 8px;
    border-bottom: 1px solid #000;
    background: ${p => p.$color};
`

const ColorStrip = styled.div`
    display: flex;
    flex-direction: column;
    align-items: center;
    justify-content: space-between;
    padding: 1px 0;
    background: ${p => p.$color};
    color: #ccc;
`

const ChannelControls = styled.div`
    padding: 1px;
    background: rgba(255, 255, 255, .06);
`

const NameLine = styled.div`
    display: flex;
    gap: 1px;
    height: 9px;
`

const TrackName = styled.div`
    ${center}
    ${bold}
    width: 61px;
    background: ${p => (p.$dark ? '#4d4d4d' : '#d6d6d6')};
    color: ${p => (p.$dark ? '#f0951c' : '#0a0a0a')};
    font-size: 8px;
    line-height: 9px;
`

const NameArrow = styled.button`
    ${center}
    width: 7px;
    background: rgba(0, 0, 0, .25);
    color: #eee;
`

const SquareButton = styled.button`
    ${center}
    ${bold}
    width: 11px;
    height: 11px;
    border: 1px solid #3c3c3c;
    border-radius: 2px;
    background: #6c6c6c;
    color: #e4e4e4;
    font-size: 7px;
    ${p => p.$rec && 'background: #4c3434;'}
    ${p => p.$blue && 'background: #1668c0;'}
    ${p => p.$faded && 'color: #b0b8b4; border-color: #5a6a66;'}
    ${p => p.$armed && 'background: #d8352c; border-color: #8c1a14;'}
`

const MuteRow = styled.div`
    display: flex;
    gap: 5px;
    margin: 2px 0 0 3px;
`

const VideoButtons = styled.div`
    display: flex;
    gap: 5px;
    margin: 2px 0 0 4px;
`

const RecDot = styled.i`
    width: 5px;
    height: 5px;
    border-radius: 3px;
    background: #eee;
`

const ModeRow = styled.div`
    display: flex;
    gap: 1px;
    margin: 3px 0 0 1px;
`

const Chip = styled.button`
    ${center}
    ${bold}
    width: ${p => p.$width}px;
    height: 9px;
    border-radius: 1px;
    background: rgba(70, 70, 70, .75);
    color: ${p => p.$tint};
`

const Elastic = styled.span`
    display: flex;
    align-items: center;
    width: 13px;
    margin-left: 1px;
    padding-left: 1px;
    background: rgba(0, 0, 0, .08);
    color: #e0e0e0;
`

const FramesWrap = styled.div`
    position: relative;
    display: flex;
    width: 46px;
    margin: 2px 0 0 1px;
    background: linear-gradient(#777, #4c4c4c);
    border-radius: 1px;
    svg {
        position: absolute;
        right: 2px;
        top: 2px;
        color: #eee;
        pointer-events: none;
    }
`

const FramesPick = styled.select`
    ${bold}
    width: 100%;
    height: 10px;
    padding-right: 5px;
    appearance: none;
    color: #f5e800;
    text-align: center;
    text-align-last: center;
`

const MeterCell = styled.div`
    display: flex;
    padding: 1px 0 1px 1px;
`

const Meter = styled.i`
    width: 7px;
    border: 1px solid #1d1602;
    background: linear-gradient(#4a1406 2px, #252604 3px, #2b2803 55%, #453506 56%);
`

const VideoDot = styled.i`
    width: 5px;
    height: 5px;
    margin: 1px 0 0 2px;
    border-radius: 3px;
    background: #4a4a16;
`

const Cell = styled.div`
    border-right: 1px solid rgba(255, 255, 255, .05);
`

const SlotColumn = styled.div`
    display: grid;
    grid-auto-rows: 10px;
    row-gap: 1px;
    align-content: start;
    padding: ${p => (p.$tight ? '2px 2px' : '3px 3px 0 2px')};
    border-right: 1px solid rgba(255, 255, 255, .05);
`

const Slot = styled.div`
    ${bold}
    display: flex;
    align-items: center;
    padding-left: 2px;
    gap: 4px;
    background: ${p => (p.$filled ? '#5a5a5a' : 'rgba(0, 0, 0, .11)')};
    color: #f0e000;
`

const Bullet = styled.i`
    align-self: flex-start;
    width: 2px;
    height: 2px;
    margin-top: 3px;
    border-radius: 1px;
    background: #e0e0e0;
`

const IoSlot = styled.button`
    ${center}
    ${bold}
    position: relative;
    width: 49px;
    margin-left: -1px;
    background: ${p => (p.$muted ? '#808080' : p.$dim ? 'rgba(150, 60, 60, .35)' : '#8f3b40')};
    color: ${p => (p.$dim ? '#c8a840' : '#f5d800')};
    svg {
        position: absolute;
        right: 1px;
        top: 2px;
        color: #e0c8c8;
    }
`

const VolSlot = styled.div`
    ${bold}
    display: grid;
    grid-template-columns: 25px 1fr;
    align-items: center;
    width: 49px;
    margin-left: -1px;
    background: #000;
    color: #f0b010;
    text-align: center;
    ${p => p.$spread && 'display: flex; justify-content: space-between; padding: 0 3px;'}
`

const Pan = styled.span`
    ${center}
    gap: ${p => (p.$pair ? 7 : 4)}px;
    border-left: 1px solid #222;
    i, svg { color: #26b866; }
`

const VideoInfo = styled.div`
    ${bold}
    display: grid;
    grid-template-columns: 24px 24px;
    grid-auto-rows: 10px;
    gap: 1px;
    align-content: start;
    align-items: center;
    padding: 3px 1px;
    color: #9fae62;
    text-align: center;
    b {
        background: #4b5450;
        color: #f5e800;
        line-height: 10px;
    }
`

const Scale = styled.div`
    background: repeating-linear-gradient(#777 0 1px, transparent 1px 5px) right / 3px 100% no-repeat, #363636;
    border-left: 1px solid #111;
`

const Filler = styled.div`
    flex: 1;
    background: ${p => p.$color};
`

const ChannelFoot = styled.div`
    display: flex;
    align-items: center;
    gap: 4px;
    height: 10px;
    padding-left: 3px;
    border-top: 1px solid #222;
    background: #2b2b2b;
    color: #aaa;
`

const TimelinePane = styled.div`
    position: relative;
    display: flex;
    flex: 1;
    flex-direction: column;
    min-width: 0;
`

// everything right of the selection end is drawn lighter
const RulerRow = styled.div`
    position: relative;
    overflow: hidden;
    border-bottom: 1px solid rgba(0, 0, 0, .35);
    background: linear-gradient(90deg, ${p => p.$bg} 57%, ${p => p.$light} 57%);
`

const TickLabel = styled.span`
    ${bold}
    position: absolute;
    top: 0;
    bottom: 0;
    padding: 2px 0 0 2px;
    border-left: 1px solid #3c3c3c;
    color: ${p => (p.$bright ? '#f5a41e' : '#c8841a')};
`

const Tempo = styled.span`
    ${bold}
    display: flex;
    align-items: center;
    gap: 1px;
    height: 100%;
    color: #f0b010;
    font-size: 7px;
`

const RedMark = styled.span`
    width: 4px;
    color: #e02010;
    overflow: hidden;
`

const MarkerBand = styled.i`
    position: absolute;
    top: 0;
    bottom: 0;
    background: color-mix(in srgb, ${p => p.$color} 32%, #2a2a2a);
`

const GapRow = styled.div`
    height: 10px;
    border-top: 1px solid #111;
    background: #2a2a2a;
`

const LaneArea = styled.div`
    ${trackRows}
    position: relative;
    background: #737373;
`

const Selection = styled.div`
    position: absolute;
    top: 43px;
    bottom: 0;
    background: #919191;
`

const SelectionFrame = styled.div`
    position: absolute;
    z-index: 3;
    top: 43px;
    bottom: 0;
    border: 1px solid #dcdcdc;
`

const Lane = styled.div`
    position: relative;
    z-index: 2;
    border-bottom: 1px solid #3d3d3d;
    background: ${p => (p.$split ? 'linear-gradient(transparent 49%, rgba(60, 60, 60, .5) 49% 51%, transparent 51%)' : 'none')};
`

const ClipBox = styled.div`
    position: absolute;
    top: 1px;
    bottom: 0;
    border: 1px solid #1c1c1c;
    background: ${p => p.$color};
    overflow: hidden;
`

const ClipSvg = styled.svg`
    display: block;
    width: 100%;
    height: 100%;
`

const ClipGain = styled.span`
    position: absolute;
    left: 1px;
    bottom: 1px;
    display: flex;
    gap: 1px;
    color: #0c0c0c;
    i {
        ${center}
        width: 7px;
        border: 1px solid currentColor;
    }
    b {
        padding: 0 1px;
        background: rgba(255, 255, 255, .4);
    }
`

const ClickClip = styled.div`
    height: 100%;
    background:
        repeating-linear-gradient(90deg, transparent 0 9px, #000 9px 11px),
        repeating-linear-gradient(90deg, #111 0 2px, #5c5c5c 2px 3px);
`

const GridLines = styled.div`
    position: absolute;
    z-index: 1;
    inset: 87px 0 auto 0;
    height: 436px;
`

const GridLine = styled.i`
    position: absolute;
    top: 0;
    bottom: 0;
    width: 1px;
    background: #b0733a;
    opacity: .5;
`

const MarkerLayer = styled.div`
    position: absolute;
    z-index: 1;
    inset: 55px 0 auto 0;
    height: 425px;
`

// the line fades a little where it runs over the selected lanes
const MarkerLine = styled.div`
    position: absolute;
    top: 0;
    bottom: 0;
    width: 1px;
    background: linear-gradient(
        transparent 7px,
        ${p => p.$color} 7px 84px,
        color-mix(in srgb, ${p => p.$color} 75%, #919191) 84px
    );
    color: ${p => p.$color};
    svg {
        position: relative;
        left: -3px;
    }
    b {
        position: absolute;
        left: 5px;
        top: 0;
        color: #f0e000;
    }
`

const PlayLine = styled.i`
    position: absolute;
    z-index: 1;
    top: 0;
    width: 1px;
    height: 139px;
    background: #d8281c;
`

const EndFlag = styled.i`
    position: absolute;
    z-index: 1;
    top: 1px;
    border: solid transparent;
    border-width: 4px 0 4px 4px;
    border-left-color: #2d9fe0;
`

const ScrollRow = styled.div`
    display: flex;
    align-items: center;
    justify-content: space-between;
    height: 10px;
    background: #1b1b1b;
`

const HThumb = styled.i`
    width: 65px;
    height: 4px;
    background: #464646;
`

const ScrollButtons = styled.div`
    display: flex;
    height: 100%;
`

const ScrollButton = styled.button`
    ${center}
    width: 10px;
    height: ${p => (p.$tall ? '10px' : '100%')};
    border: 1px solid #1a1a1a;
    background: #2c2c2c;
    color: #aaa;
`

const StripPane = styled.div`
    display: flex;
    flex: none;
    flex-direction: column;
    width: 10px;
    background: #1b1b1b;
`

const StripCell = styled.div`
    ${center}
    background: ${p => p.$color || '#2a2a2a'};
    color: #bbb;
`

const CheckCell = styled.div`
    height: 11px;
    padding-top: 1px;
    color: #c89a10;
`

const VTrack = styled.div`
    display: flex;
    flex: 1;
    justify-content: center;
    padding: 3px 0 16px;
`

const VThumb = styled.i`
    width: 4px;
    background: #3c3c3c;
`

const Footer = styled.nav`
    display: flex;
    height: 16px;
    padding-left: 1px;
    border-bottom: 3px solid #242424;
    background: #151515;
`

const Tab = styled.button`
    ${center}
    ${bold}
    gap: 5px;
    width: ${p => p.$width}px;
    border-right: 1px solid #0c0c0c;
    background: ${p => (p.$active ? '#1c1c1c' : '#202020')};
    color: ${p => (p.$active ? '#e8c414' : '#80681a')};
    font-size: 7px;
    svg { color: ${p => (p.$active ? '#ccc' : '#555')}; }
`

export default App
